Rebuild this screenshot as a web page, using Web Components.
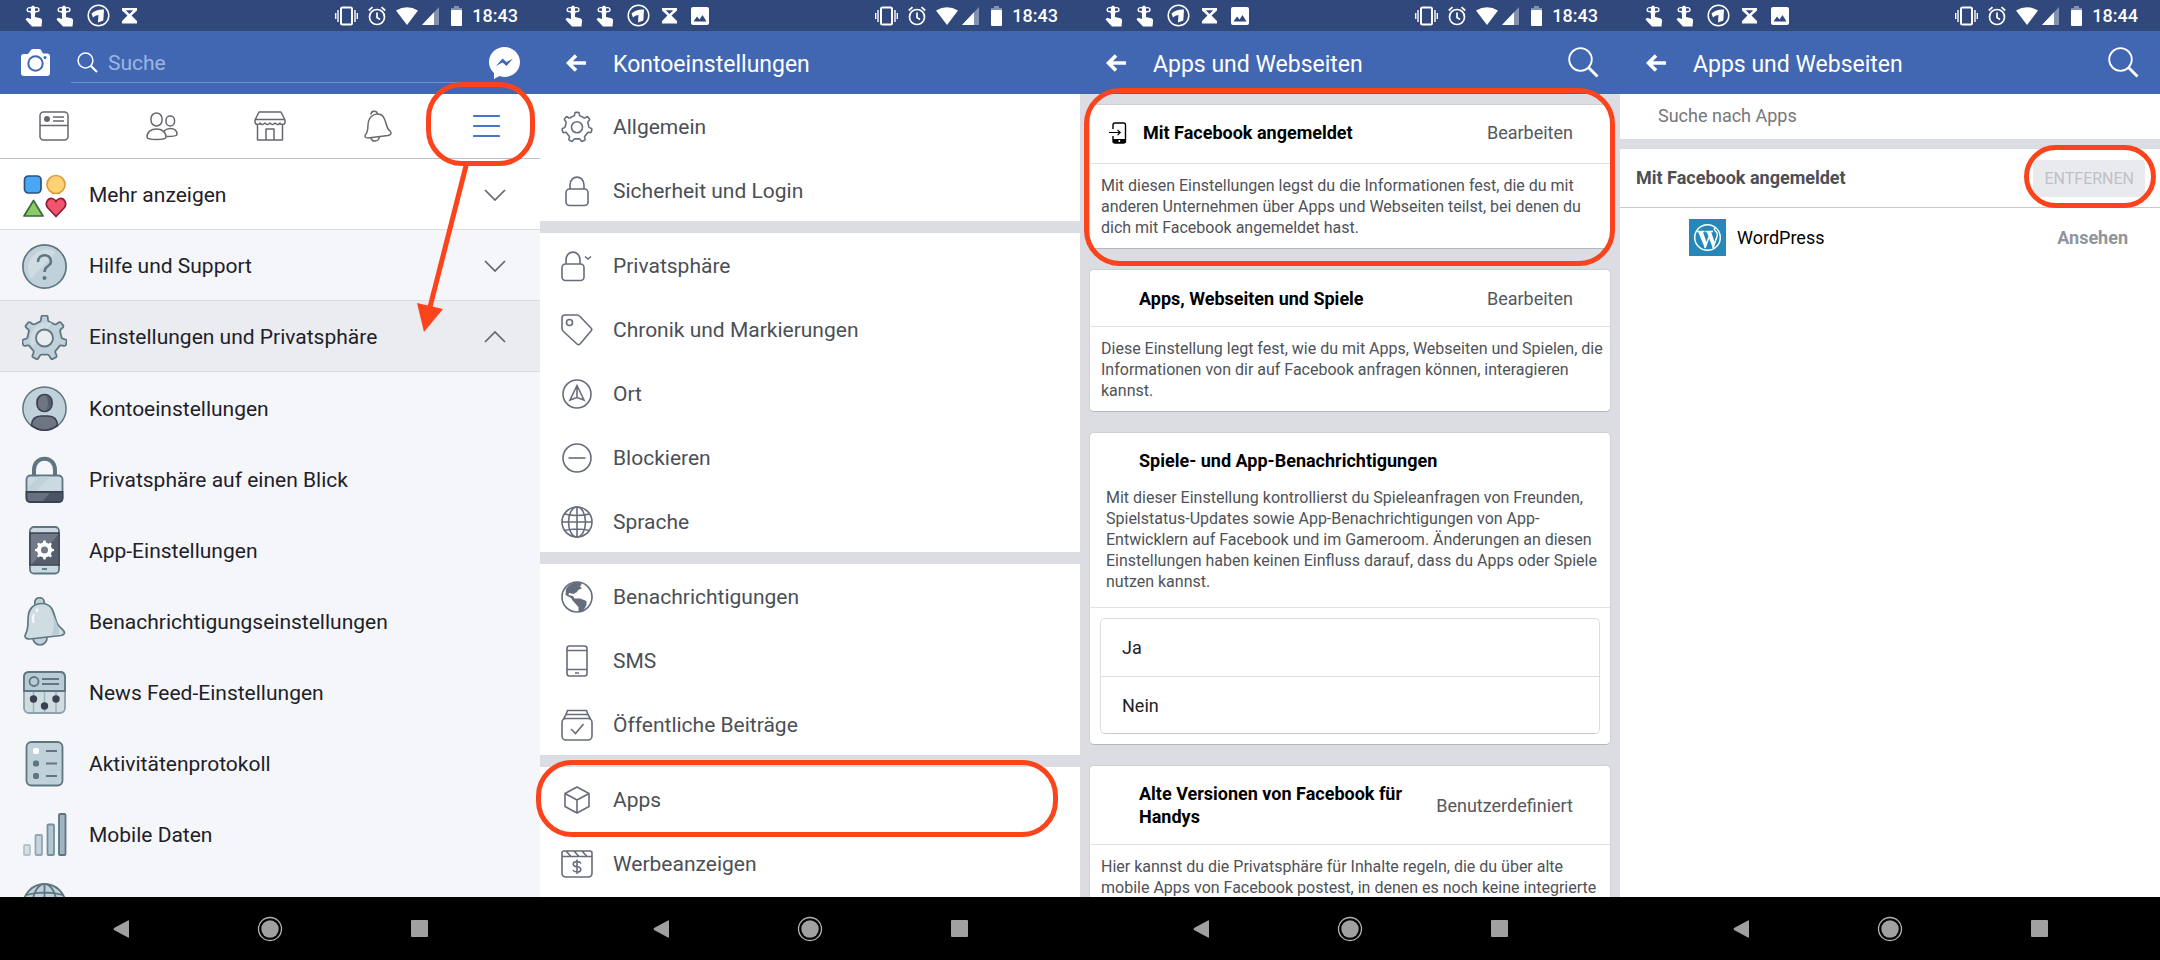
<!DOCTYPE html>
<html lang="de">
<head>
<meta charset="utf-8">
<title>Facebook Einstellungen</title>
<style>
  body {
    margin: 0;
    background: #fff;
    font-family: Roboto, "Liberation Sans", sans-serif;
  }
  main {
    display: grid;
    grid-template-columns: repeat(4, 1fr);
    height: 100vh;
    overflow: hidden;
  }
</style>
</head>
<body>
<main>
  <phone-screen>
    <status-bar slot="status" time="18:43"></status-bar>
    <search-header slot="header"></search-header>
    <tab-strip></tab-strip>
    <menu-row icon="shapes" arrow="down" tone="white">Mehr anzeigen</menu-row>
    <menu-row icon="help" arrow="down" tone="light">Hilfe und Support</menu-row>
    <menu-row icon="gear" arrow="up" tone="dark">Einstellungen und Privatsphäre</menu-row>
    <menu-row icon="account">Kontoeinstellungen</menu-row>
    <menu-row icon="padlock">Privatsphäre auf einen Blick</menu-row>
    <menu-row icon="phonegear">App-Einstellungen</menu-row>
    <menu-row icon="bigbell">Benachrichtigungseinstellungen</menu-row>
    <menu-row icon="feedprefs">News Feed-Einstellungen</menu-row>
    <menu-row icon="log">Aktivitätenprotokoll</menu-row>
    <menu-row icon="bars">Mobile Daten</menu-row>
    <menu-row icon="bigglobe"></menu-row>
  </phone-screen>

  <phone-screen>
    <status-bar slot="status" time="18:43" picture></status-bar>
    <title-header slot="header">Kontoeinstellungen</title-header>
    <settings-group>
      <settings-row icon="cog">Allgemein</settings-row>
      <settings-row icon="lock">Sicherheit und Login</settings-row>
    </settings-group>
    <settings-group>
      <settings-row icon="lockmenu">Privatsphäre</settings-row>
      <settings-row icon="tag">Chronik und Markierungen</settings-row>
      <settings-row icon="place">Ort</settings-row>
      <settings-row icon="block">Blockieren</settings-row>
      <settings-row icon="globe">Sprache</settings-row>
    </settings-group>
    <settings-group>
      <settings-row icon="earth">Benachrichtigungen</settings-row>
      <settings-row icon="mobile">SMS</settings-row>
      <settings-row icon="posts">Öffentliche Beiträge</settings-row>
    </settings-group>
    <settings-group>
      <settings-row icon="cube" marked>Apps</settings-row>
      <settings-row icon="ads">Werbeanzeigen</settings-row>
    </settings-group>
  </phone-screen>

  <phone-screen tone="grey">
    <status-bar slot="status" time="18:43" picture></status-bar>
    <title-header slot="header" search>Apps und Webseiten</title-header>
    <card-list>
      <settings-card icon="signin" action="Bearbeiten" marked>
        <span slot="title">Mit Facebook angemeldet</span>
        Mit diesen Einstellungen legst du die Informationen fest, die du mit anderen Unternehmen über Apps und Webseiten teilst, bei denen du dich mit Facebook angemeldet hast.
      </settings-card>
      <settings-card action="Bearbeiten">
        <span slot="title">Apps, Webseiten und Spiele</span>
        Diese Einstellung legt fest, wie du mit Apps, Webseiten und Spielen, die Informationen von dir auf Facebook anfragen können, interagieren kannst.
      </settings-card>
      <settings-card plain>
        <span slot="title">Spiele- und App-Benachrichtigungen</span>
        Mit dieser Einstellung kontrollierst du Spieleanfragen von Freunden, Spielstatus-Updates sowie App-Benachrichtigungen von App-Entwicklern auf Facebook und im Gameroom. Änderungen an diesen Einstellungen haben keinen Einfluss darauf, dass du Apps oder Spiele nutzen kannst.
        <choice-list slot="choices"></choice-list>
      </settings-card>
      <settings-card action="Benutzerdefiniert">
        <span slot="title">Alte Versionen von Facebook für Handys</span>
        Hier kannst du die Privatsphäre für Inhalte regeln, die du über alte mobile Apps von Facebook postest, in denen es noch keine integrierte
      </settings-card>
    </card-list>
  </phone-screen>

  <phone-screen>
    <status-bar slot="status" time="18:44" picture></status-bar>
    <title-header slot="header" search>Apps und Webseiten</title-header>
    <connected-apps></connected-apps>
  </phone-screen>
</main>

<script>
  // cog outline with rounded teeth, first tooth pointing up
  function cogPath(cx, cy, outer, inner, teeth) {
    const step = Math.PI * 2 / teeth;
    const at = (a, r) => (cx + r * Math.cos(a)).toFixed(1) + ' ' + (cy + r * Math.sin(a)).toFixed(1);
    let d = '';
    for (let i = 0; i < teeth; i++) {
      const a = i * step - Math.PI / 2;
      d += (i ? 'L' : 'M') + at(a - 0.3 * step, inner);
      d += 'Q' + at(a - 0.22 * step, inner) + ' ' + at(a - 0.19 * step, (inner + outer) / 2);
      d += 'Q' + at(a - 0.17 * step, outer) + ' ' + at(a - 0.1 * step, outer);
      d += 'L' + at(a + 0.1 * step, outer);
      d += 'Q' + at(a + 0.17 * step, outer) + ' ' + at(a + 0.19 * step, (inner + outer) / 2);
      d += 'Q' + at(a + 0.22 * step, inner) + ' ' + at(a + 0.3 * step, inner);
    }
    return d + 'Z';
  }

  const OUT = '#5d7681';
  const FILL = '#c1d1d9';
  const DARK = '#3a4151';

  // name: [width, height, markup]
  const ICONS = {
    // status bar
    hand: [19, 22, '<path d="M6 3Q6 .5 8 .5T10 3V12L15.500 13.300Q17.300 13.800 17.100 15.800L16.500 21.500H7L.5 14.500L2 12.800L6 14Z" fill="#fff"/><g fill="none" stroke="#fff" stroke-width="1.300"><ellipse cx="4.800" cy="4.700" rx="2.700" ry="2"/><ellipse cx="11.300" cy="4.700" rx="2.700" ry="2"/><path d="M5.500 7.500H10.500" stroke-width="2"/></g>'],
    one: [23, 23, '<circle cx="11.500" cy="11.500" r="10.300" fill="none" stroke="#fff" stroke-width="1.500"/><path d="M4.500 9.500Q9.500 5 17 5.500L16.300 16.500L11 18.500L11.500 11Q8 11.200 6 13.500Z" fill="#fff"/>'],
    hourglass: [17, 17, '<path d="M0 1H15V3.500L9.500 8.500L15 14V16.500H0V14L5.500 8.500L0 3.500Z" fill="#fff"/><path d="M3.800 3.200H11.200L7.500 7Z" fill="#30487b"/>'],
    picture: [18, 18, '<rect width="18" height="18" rx="2" fill="#fff"/><path d="M2.500 14.500L6 9.500L8.500 12.500L11.500 8L15.500 14.500Z" fill="#30487b"/>'],
    vibrate: [23, 20, '<g fill="none" stroke="#fff"><rect x="6" y="1.500" width="11" height="17" rx="1.500" stroke-width="2"/><path d="M3 4V16M20 4V16M.700 7V13M22.300 7V13" stroke-width="1.400"/></g>'],
    alarm: [18, 20, '<g fill="none" stroke="#fff" stroke-width="1.700"><circle cx="9" cy="11" r="7.500"/><path d="M9 6.500V11.500L12 13.500M.800 4.500L4.500 1.200M17.200 4.500L13.500 1.200"/></g>'],
    signal: [43, 18, '<path d="M0 3.500Q11 -3 22 3.500L11 18Z" fill="#fff"/><path d="M43 0V18H26Z" fill="#fff" opacity=".4"/><path d="M38 5.300V18H26Z" fill="#fff"/>'],
    battery: [13, 20, '<path d="M2 2H5V0H10V2H13V7H2Z" fill="#fff" opacity=".4"/><rect x="2" y="4" width="11" height="16" rx="1" fill="#fff"/>'],

    // headers
    camera: [29, 27, '<path d="M3 5H7L10 1Q10.500 0 12 0H18Q19.500 0 20 1L22 4.500H26Q29 4.500 29 7.500V24Q29 27 26 27H3Q0 27 0 24V8Q0 5 3 5Z" fill="#fff"/><circle cx="14.500" cy="14.500" r="7.200" fill="none" stroke="#4267b2" stroke-width="2"/><circle cx="24" cy="8.500" r="1.500" fill="#4267b2"/>'],
    searchsmall: [21, 21, '<g fill="none" stroke="#fff"><circle cx="8.500" cy="8.500" r="7.400" stroke-width="1.500"/><path d="M13.700 13.700L20 20" stroke-width="2.200"/></g>'],
    search: [31, 31, '<g fill="none" stroke="#fff"><circle cx="12.500" cy="12.500" r="11.300" stroke-width="1.800"/><path d="M20.500 20.500L29.500 29.500" stroke-width="2.800"/></g>'],
    messenger: [31, 32, '<path d="M15.500 0C24 0 31 6.500 31 15S24 30 15.500 30Q13 30 10.500 29L5 32V26Q0 21.500 0 15C0 6.500 7 0 15.500 0Z" fill="#fff"/><path d="M7 19L13.500 11.500L17.500 15L24 11.500L17.500 19L13.500 15.500Z" fill="#4267b2"/>'],
    back: [21, 18, '<path d="M20 9H3M10 1.500L2.500 9L10 16.500" fill="none" stroke="#fff" stroke-width="3.600"/>'],

    // tabs
    feed: [30, 30, '<g fill="none" stroke="#66686d" stroke-width="1.500"><rect x="1" y="1" width="28" height="28" rx="3.500"/><path d="M1 14.500H29M14 6H25M14 10H25"/></g><circle cx="8" cy="8" r="3" fill="#66686d"/>'],
    friends: [32, 30, '<g fill="none" stroke="#66686d" stroke-width="1.500"><rect x="5" y="2" width="11" height="13" rx="5.500"/><path d="M1 26C1 21 5 18 10.500 18S20 21 20 26Q20 28.500 10.500 28.500T1 26Z"/><rect x="20" y="5" width="8.500" height="10" rx="4.200"/><path d="M18 20Q21 17.500 24 17.500C28.500 17.500 31 20 31 23.500Q31 25.500 20.500 25.500"/></g>'],
    shop: [32, 30, '<g fill="none" stroke="#66686d" stroke-width="1.500" stroke-linejoin="round"><path d="M5 1H27L31 9V11Q31 13.500 28.500 13.500T26 12Q24 15 21 12Q18.500 15 16 12Q13.500 15 11 12Q8 15 6 12Q5.500 13.500 3.500 13.500T1 11V9ZM1.500 8.500H30.500M3.500 13.500V29H28.500V13.500M12 29V18H20V29"/></g>'],
    bell: [30, 32, '<g fill="none" stroke="#66686d" stroke-width="1.500" stroke-linejoin="round"><path d="M3 24C6 20 4 14 6 10C9 3 18 2 21 8C24 14 23 18 27 21C29 23 28 25 25 25.500L5 28C2 28 1 26 3 24Z"/><path d="M8 4.500Q8 1.500 11 1.300T14.500 4M8 28Q9 31.500 12.500 31T16.500 26.500"/></g>'],
    burger: [27, 24, '<path d="M1 2H26M1 12H26M1 22H26" stroke="#4477c8" stroke-width="2.200" stroke-linecap="round"/>'],

    // main menu
    shapes: [45, 45, '<g stroke-width="1.700" stroke-linejoin="round"><rect x="2.500" y="3" width="16.500" height="17" rx="4" fill="#47a7f4" stroke="#2a5285"/><circle cx="34" cy="11.500" r="9" fill="#fcd274" stroke="#df9c3f"/><path d="M11.500 27.500L21 43H2Z" fill="#8ec969" stroke="#386b36"/><path d="M34 43.500L25.500 34.500C22.500 30 26 25 30 25.500Q33 26 34 28.500Q35 26 38 25.500C42 25 45.500 30 42.500 34.500Z" fill="#f2546d" stroke="#8d1b36"/></g>'],
    help: [45, 45, `<circle cx="22.500" cy="22.500" r="21.600" fill="${FILL}" stroke="${OUT}" stroke-width="1.700"/><path d="M9 35A19 19 0 0 1 34 8Z" fill="#d0dce2"/><path d="M16 18C16 9 29 9 29 17.500C29 23 22.500 21 22.500 28" fill="none" stroke="${OUT}" stroke-width="2.500"/><circle cx="22.500" cy="34" r="2" fill="${OUT}"/>`],
    gear: [45, 45, `<path d="${cogPath(22.5, 23, 22.5, 17, 7)}" fill="${FILL}" stroke="${OUT}" stroke-width="1.800" stroke-linejoin="round"/><path d="M10 32L30 8A17 17 0 0 0 10 32Z" fill="#cfdbe1"/><circle cx="22.500" cy="23" r="8.500" fill="#ebecf0" stroke="${OUT}" stroke-width="1.800"/>`],
    account: [45, 45, `<circle cx="22.500" cy="22.500" r="21.600" fill="${FILL}" stroke="${OUT}" stroke-width="1.500"/><g fill="#6f7583" stroke="${DARK}" stroke-width="1.700"><rect x="15" y="8.500" width="15" height="17" rx="7.500"/><path d="M9.500 39.500Q10 30 19 30H26Q35 30 35.500 39.500Q22.500 49 9.500 39.500Z"/></g><path d="M24 9.500C31 11 31 22 24 24.500Q28 17 24 9.500Z" fill="#555c6c"/>`],
    padlock: [45, 47, `<path d="M12 19V14C12 -1 33 -1 33 14V19" fill="none" stroke="${OUT}" stroke-width="4"/><rect x="4.500" y="19.500" width="36" height="26.500" rx="4" fill="#cbd9e0" stroke="${OUT}" stroke-width="1.800"/><path d="M4.500 36H40.500V42Q40.500 46 36.500 46H8.500Q4.500 46 4.500 42Z" fill="#686f7e" stroke="${DARK}" stroke-width="1.800"/><path d="M28 37H39.500V42Q39.500 45 36.500 45H21Z" fill="#4b5364"/><path d="M17 20.500H28L14 35H6V32Z" fill="#c1d1d9"/>`],
    phonegear: [45, 49, `<rect x="8" y="1" width="29" height="46.500" rx="4" fill="#cbdae1" stroke="${OUT}" stroke-width="1.800"/><rect x="8" y="7" width="29" height="32" fill="#737987" stroke="${DARK}" stroke-width="1.500"/><path d="M36 9V38H10Z" fill="#565d6d"/><path d="${cogPath(22.5, 24, 9.5, 7.5, 8)}" fill="#fff"/><circle cx="22.500" cy="24" r="3.500" fill="#737987"/><path d="M20 43H25" stroke="${OUT}" stroke-width="1.800"/>`],
    bigbell: [45, 49, `<g fill="${FILL}" stroke="${OUT}" stroke-width="1.700" stroke-linejoin="round"><circle cx="17.500" cy="5.500" r="4.800"/><circle cx="18" cy="41" r="7"/><path d="M4 36C8 28 4 20 8 13C13 4 26 5 30 12C35 22 32 26 41 33C44 36 42 38 39 38.500L8 42C3 42 2 40 4 36Z" fill="#cfdce2"/></g><path d="M28 12Q37 27 37 37L30 38Q35 25 28 12Z" fill="#b9cbd4"/><path d="M12 17Q10 22 12 26M15 11.500V15" stroke="#fff" stroke-width="2.400" fill="none" opacity=".8"/>`],
    feedprefs: [45, 45, `<rect x="2" y="2" width="41" height="41" rx="5" fill="#cfdce2" stroke="#8ca1ab" stroke-width="1.800"/><path d="M2 21V7Q2 2 7 2H38Q43 2 43 7V21Z" fill="#b9cbd4" stroke="${OUT}" stroke-width="1.800"/><path d="M11.500 22V42M22.500 22V42M34 22V42" stroke="#9fb2bb" stroke-width="1.500"/><path d="M20 9H37M20 14H37" stroke="${OUT}" stroke-width="1.800"/><circle cx="12" cy="11.500" r="4.500" fill="none" stroke="${OUT}" stroke-width="1.800"/><g fill="${DARK}"><circle cx="11.500" cy="29" r="3.700"/><circle cx="22.500" cy="36" r="3.700"/><circle cx="34" cy="29" r="3.700"/></g>`],
    log: [45, 47, `<rect x="4.500" y="2" width="36" height="43.500" rx="5" fill="${FILL}" stroke="${OUT}" stroke-width="1.800"/><path d="M24 11H35M24 23.500H35M24 36H35" stroke="${OUT}" stroke-width="1.800"/><rect x="11" y="8" width="6" height="6" rx="2" fill="#fff"/><g fill="${OUT}"><rect x="11" y="20.500" width="6" height="6" rx="2"/><rect x="11" y="33" width="6" height="6" rx="2"/></g>`],
    bars: [45, 45, `<g stroke-width="1.800"><rect x="2" y="33" width="6" height="10" rx="1" fill="#d5dfe4" stroke="#b4c3cb"/><rect x="13.500" y="23" width="6.500" height="20" rx="1" fill="#c6d5dc" stroke="#92a7b1"/><rect x="25.500" y="12.500" width="6.500" height="30.500" rx="1" fill="#b3c7d1" stroke="#73909c"/><rect x="37" y="2" width="6.500" height="41" rx="1" fill="#9fb6c1" stroke="${OUT}"/></g>`],
    bigglobe: [45, 45, `<g fill="${FILL}" stroke="${OUT}" stroke-width="1.800"><circle cx="22.500" cy="22.500" r="21.500"/><ellipse cx="22.500" cy="22.500" rx="12" ry="21.500"/><path d="M22.500 1V44M1 22.500H44M4 12Q22.500 7 41 12M4 33Q22.500 38 41 33" fill="none"/></g>`],
    down: [22, 12, '<path d="M1 1L11 11L21 1" fill="none" stroke="#606770" stroke-width="1.700"/>'],
    up: [22, 12, '<path d="M1 11L11 1L21 11" fill="none" stroke="#606770" stroke-width="1.700"/>'],

    // account settings
    cog: [32, 32, `<g class="line"><path d="${cogPath(16, 16.3, 15, 11.8, 7)}" stroke-linejoin="round"/><circle cx="16" cy="16.300" r="5.500"/></g>`],
    lock: [32, 32, '<g class="line"><rect x="5" y="14" width="22" height="16.500" rx="3.500"/><path d="M9 14V10C9 -.500 23 -.500 23 10V14"/></g>'],
    lockmenu: [32, 32, '<g class="line"><rect x="1" y="14" width="22" height="16.500" rx="3.500"/><path d="M5 14V10C5 -.500 19 -.500 19 10V14M24 6.500L27 9L30 6.500"/></g>'],
    tag: [32, 32, '<g class="line"><path d="M1 4Q1 1 4 1H16Q17.500 1 19 2.500L30 14Q31.500 15.500 30 17L19 30Q17.500 31.500 16 30L2.500 17.500Q1 16 1 14.500Z"/><circle cx="8.500" cy="8.500" r="3"/></g>'],
    place: [32, 32, '<g class="line"><circle cx="16" cy="16" r="14"/><path d="M16 7.500L23 22L16 19.500L9 22ZM16 7.500V19.500"/></g>'],
    block: [32, 32, '<g class="line"><circle cx="16" cy="16" r="14"/><path d="M7.500 16H24.500"/></g>'],
    globe: [32, 32, '<g class="line"><circle cx="16" cy="16" r="15"/><ellipse cx="16" cy="16" rx="8.500" ry="15"/><path d="M16 1V31M1 16H31M3.500 8Q16 11 28.500 8M3.500 24.500Q16 21.500 28.500 24.500"/></g>'],
    earth: [32, 32, '<g class="line"><circle cx="16" cy="16" r="15"/></g><path d="M5 8Q9 1.500 16 1L21 2.500L19 5.500L21 7.500Q17 8 16 11L12.500 13L8 12L7.500 14L12 15L13.500 17.500H19L25.500 20V24L22 30L17.500 31L17.500 26L12 20L10 17L4.500 14Z" fill="#656c7b"/>'],
    mobile: [32, 32, '<g class="line"><rect x="6" y="1" width="20" height="30" rx="2.500"/><path d="M6 5.500H26M6 24.500H26M14 28H18"/></g>'],
    posts: [32, 32, '<g class="line"><rect x="1" y="9.500" width="30" height="21.500" rx="4"/><path d="M2.500 10L5 5.500H27L29.500 10M5 5.500L6.500 1.500H25.500L27 5.500M10 20L14.500 24.500L22.500 15"/></g>'],
    cube: [32, 32, '<g class="line" stroke-linejoin="round"><path d="M16 3L28 9.500V22.500L16 29L4 22.500V9.500ZM4 9.500L16 16L28 9.500M16 16V29"/></g>'],
    ads: [32, 32, '<g class="line"><path d="M1 8.500V5Q1 3 3 3H29Q31 3 31 5V25Q31 29 27 29H5Q1 29 1 25V8.500H31M5 3L10 8.500M13 3L18 8.500M21 3L26 8.500"/><path d="M20 15.500Q19 13.500 16 13.500C11 13.500 11 18.500 16 18.700C21 19 21 24 16 24Q13 24 12 22M16 11.500V26"/></g>'],

    // privacy cards
    signin: [18, 22, '<path d="M4 7V3Q4 1 6 1H14.500Q16.500 1 16.500 3V19Q16.500 21 14.500 21H6Q4 21 4 19V14" fill="none" stroke="#000" stroke-width="1.400"/><path d="M4 17H16.500V21H4Z"/><circle cx="10.300" cy="19" r="1" fill="#fff"/><path d="M0 10.500H11M8.500 7.800L11.200 10.500L8.500 13.200" fill="none" stroke="#000" stroke-width="1.200"/>'],
    wordpress: [37, 37, '<rect width="37" height="37" fill="#2588b8"/><circle cx="18.500" cy="18.500" r="12.800" fill="none" stroke="#fff" stroke-width="1.500"/><path d="M8 12.500H15.500M16.500 12.500H24" stroke="#fff" stroke-width="1.300"/><path d="M9 12.500H13.800L18 24.500L16 29.500ZM17.500 12.500H22L26 24.500L24 29.500Z" fill="#fff"/><path d="M16 29L20 18M24 29L28 17.500Q29 14 26.500 12Q24.500 10.500 26 9" fill="none" stroke="#fff" stroke-width="1.500"/>'],

    // system navigation
    navback: [18, 20, '<path d="M17 2V18Q17 19 16 18.500L2 11Q1 10 2 9L16 1.500Q17 1 17 2Z" fill="#a0a0a0"/>'],
    navhome: [26, 26, '<circle cx="13" cy="13" r="11.500" fill="none" stroke="#b4b4b4" stroke-width="1.300"/><circle cx="13" cy="13" r="8.700" fill="#a0a0a0"/>'],
    navrecent: [17, 17, '<rect width="17" height="17" rx="1" fill="#a0a0a0"/>']
  };

  function icon(name) {
    if (!ICONS[name]) return '';
    const [w, h, body] = ICONS[name];
    return `<svg width="${w}" height="${h}" viewBox="0 0 ${w} ${h}" aria-hidden="true">${body}</svg>`;
  }

  const BASE = `
    <style>
      * { box-sizing: border-box; }
      :host { display: block; }
      svg { display: block; flex: none; }
      button, a, input {
        margin: 0; padding: 0; border: 0; background: none;
        font: inherit; color: inherit; text-align: left; text-decoration: none;
      }
      .line { fill: none; stroke: #656c7b; stroke-width: 1.6; }
    </style>`;

  class BaseElement extends HTMLElement {
    connectedCallback() {
      if (this.shadowRoot) return;
      const tmpl = document.createElement('template');
      tmpl.innerHTML = BASE + this.render();
      this.attachShadow({ mode: 'open' }).appendChild(tmpl.content.cloneNode(true));
    }
  }

  class PhoneScreen extends BaseElement {
    render() {
      return `
        <style>
          :host {
            display: grid;
            grid-template-rows: 31px 63px minmax(0, 1fr) 63px;
            min-width: 0;
            height: 100vh;
            overflow-y: clip;
          }
          :host([tone="grey"]) .content { background: #dcdde2; }
          .content { min-width: 0; }
          nav {
            position: relative;
            z-index: 1;
            display: flex;
            justify-content: center;
            gap: 101px;
            background: #000;
          }
          nav button { width: 48px; display: grid; place-items: center; }
        </style>
        <slot name="status"></slot>
        <slot name="header"></slot>
        <div class="content"><slot></slot></div>
        <nav>
          <button type="button" aria-label="Zurück">${icon('navback')}</button>
          <button type="button" aria-label="Startbildschirm">${icon('navhome')}</button>
          <button type="button" aria-label="Letzte Apps">${icon('navrecent')}</button>
        </nav>`;
    }
  }

  class StatusBar extends BaseElement {
    render() {
      return `
        <style>
          :host {
            display: flex;
            justify-content: space-between;
            padding: 0 22px 0 25px;
            background: #30487b;
            color: #fff;
            font-size: 18px;
            font-weight: 500;
          }
          div { display: flex; align-items: center; gap: 12px; }
          .right { gap: 10px; }
        </style>
        <div>
          ${icon('hand')}${icon('hand')}${icon('one')}${icon('hourglass')}
          ${this.hasAttribute('picture') ? icon('picture') : ''}
        </div>
        <div class="right">
          ${icon('vibrate')}${icon('alarm')}${icon('signal')}${icon('battery')}
          <time>${this.getAttribute('time')}</time>
        </div>`;
    }
  }

  class SearchHeader extends BaseElement {
    render() {
      return `
        <style>
          :host {
            display: flex;
            align-items: center;
            gap: 21px;
            padding: 0 20px 0 21px;
            background: #4267b2;
            color: #fff;
          }
          label {
            flex: 1;
            display: flex;
            align-items: center;
            gap: 10px;
            height: 40px;
            padding-left: 6px;
            border-bottom: 1px solid #7090cf;
          }
          input { flex: 1; min-width: 0; padding-top: 1px; font-size: 21px; outline: 0; }
          input::placeholder { color: #9db4e3; opacity: 1; }
        </style>
        <button type="button" aria-label="Kamera">${icon('camera')}</button>
        <label>${icon('searchsmall')}<input type="text" placeholder="Suche" aria-label="Suche"></label>
        <button type="button" aria-label="Messenger">${icon('messenger')}</button>`;
    }
  }

  class TitleHeader extends BaseElement {
    render() {
      return `
        <style>
          :host {
            display: flex;
            align-items: center;
            padding: 0 21px 0 26px;
            background: #4267b2;
            color: #fff;
          }
          h1 { flex: 1; margin: 0 0 0 26px; padding-top: 3px; font-size: 23px; font-weight: 400; }
        </style>
        <button type="button" aria-label="Zurück">${icon('back')}</button>
        <h1><slot></slot></h1>
        ${this.hasAttribute('search') ? `<button type="button" aria-label="Suchen">${icon('search')}</button>` : ''}`;
    }
  }

  // red ring drawn over whatever it is placed in
  class CalloutRing extends BaseElement {
    render() {
      return `
        <style>
          :host {
            position: absolute;
            border: 5px solid #fb431c;
            border-radius: 36px;
            pointer-events: none;
          }
        </style>`;
    }
  }

  class TabStrip extends BaseElement {
    render() {
      return `
        <style>
          :host {
            display: grid;
            grid-template-columns: repeat(5, 1fr);
            height: 64px;
            background: #fff;
            border-bottom: 1px solid #bcbec2;
          }
          .cell { position: relative; display: grid; }
          button { display: grid; place-items: center; }
          callout-ring { inset: -12px 5px -8px -6px; }
          .arrow { position: absolute; left: -16px; top: 68px; }
        </style>
        <div class="cell"><button type="button" aria-label="Neuigkeiten">${icon('feed')}</button></div>
        <div class="cell"><button type="button" aria-label="Freunde">${icon('friends')}</button></div>
        <div class="cell"><button type="button" aria-label="Marketplace">${icon('shop')}</button></div>
        <div class="cell"><button type="button" aria-label="Benachrichtigungen">${icon('bell')}</button></div>
        <div class="cell">
          <button type="button" aria-label="Menü">${icon('burger')}</button>
          <callout-ring></callout-ring>
          <svg class="arrow" width="56" height="172" viewBox="0 0 56 172" aria-hidden="true">
            <path d="M51 0L13 149" stroke="#fb431c" stroke-width="5"/>
            <path d="M1 141L27 147L8 170Z" fill="#fb431c"/>
          </svg>
        </div>`;
    }
  }

  class MenuRow extends BaseElement {
    render() {
      return `
        <style>
          :host { background: #f5f6f9; color: #1d2129; }
          :host([tone]) { border-bottom: 1px solid #d8dadf; }
          :host([tone]) button { height: 70px; }
          :host([tone="white"]) { background: #fff; }
          :host([tone="dark"]) { background: #ebecf0; }
          button {
            display: flex;
            align-items: center;
            gap: 22px;
            width: 100%;
            height: 71px;
            padding: 2px 34px 0 22px;
            font-size: 21px;
          }
          span { flex: 1; }
        </style>
        <button type="button">
          ${icon(this.getAttribute('icon'))}
          <span><slot></slot></span>
          ${icon(this.getAttribute('arrow'))}
        </button>`;
    }
  }

  class SettingsGroup extends BaseElement {
    render() {
      return `
        <style>
          :host { display: grid; gap: 1px; background: #fff; }
          :host(:not(:first-of-type)) { border-top: 12px solid #dcdde2; }
        </style>
        <slot></slot>`;
    }
  }

  class SettingsRow extends BaseElement {
    render() {
      return `
        <style>
          :host { position: relative; color: #4b4f56; }
          a {
            display: flex;
            align-items: center;
            gap: 20px;
            height: 63px;
            padding: 3px 21px 0;
            font-size: 21px;
          }
          callout-ring { inset: -7px 22px -7px -4px; }
        </style>
        <a href="#">${icon(this.getAttribute('icon'))}<slot></slot></a>
        ${this.hasAttribute('marked') ? '<callout-ring></callout-ring>' : ''}`;
    }
  }

  class CardList extends BaseElement {
    render() {
      return `
        <style>
          :host { display: grid; gap: 20px; padding: 10px 9px; }
        </style>
        <slot></slot>`;
    }
  }

  class SettingsCard extends BaseElement {
    render() {
      const action = this.getAttribute('action');
      return `
        <style>
          :host {
            position: relative;
            background: #fff;
            border: 1px solid #cfd1d5;
            border-bottom-color: #b4b6ba;
            border-radius: 5px;
          }
          header {
            display: flex;
            align-items: center;
            justify-content: space-between;
            gap: 16px;
            min-height: 57px;
            padding: 16px 37px 16px 49px;
            border-bottom: 1px solid #e2e3e5;
            font-size: 18px;
            line-height: 23px;
          }
          h2 { display: flex; align-items: center; gap: 16px; margin: 0; font: inherit; font-weight: 700; color: #000; }
          a { color: #55585e; }
          p { margin: 0; padding: 11px 2px 10px 11px; font-size: 16px; line-height: 21px; color: #4f5258; }
          :host([icon]) header { padding: 16px 37px 19px 19px; }
          :host([plain]) header { min-height: 52px; padding-bottom: 13px; padding-top: 15px; border-bottom: 0; }
          :host([plain]) p { padding: 2px 11px 15px 16px; }
          callout-ring { inset: -17px -5px -18px -6px; }
        </style>
        <header>
          <h2>${icon(this.getAttribute('icon'))}<slot name="title"></slot></h2>
          ${action ? `<a href="#">${action}</a>` : ''}
        </header>
        <p><slot></slot></p>
        <slot name="choices"></slot>
        ${this.hasAttribute('marked') ? '<callout-ring></callout-ring>' : ''}`;
    }
  }

  class ChoiceList extends BaseElement {
    render() {
      return `
        <style>
          :host { padding: 10px; border-top: 1px solid #e2e3e5; }
          div { border: 1px solid #dcdee1; border-bottom-color: #c9cbcf; border-radius: 5px; }
          button {
            display: block;
            width: 100%;
            height: 57px;
            padding: 0 21px;
            font-size: 18px;
            color: #1d2129;
          }
          button + button { border-top: 1px solid #dcdee1; }
        </style>
        <div>
          <button type="button">Ja</button>
          <button type="button">Nein</button>
        </div>`;
    }
  }

  class ConnectedApps extends BaseElement {
    render() {
      return `
        <style>
          :host { background: #fff; font-size: 18px; }
          input { display: block; width: 100%; height: 45px; padding: 0 38px 2px; outline: 0; }
          input::placeholder { color: #75777b; opacity: 1; }
          header {
            display: flex;
            align-items: center;
            justify-content: space-between;
            height: 69px;
            padding: 0 15px 0 16px;
            border-top: 10px solid #dcdde2;
            border-bottom: 1px solid #c8cacd;
          }
          h2 { margin: 0; padding-bottom: 2px; font: inherit; font-weight: 700; color: #4b4f56; }
          .remove { position: relative; }
          .remove button {
            height: 37px;
            padding: 0 11px;
            border-radius: 3px;
            background: #e9eaed;
            color: #bec1c6;
            font-size: 16px;
          }
          callout-ring { inset: -15px -11px -11px -9px; }
          .app { display: flex; align-items: center; gap: 11px; padding: 11px 32px 11px 69px; }
          .app span { flex: 1; color: #000; }
          .app a { font-weight: 700; color: #90949c; }
        </style>
        <input type="text" placeholder="Suche nach Apps" aria-label="Suche nach Apps">
        <header>
          <h2>Mit Facebook angemeldet</h2>
          <div class="remove">
            <button type="button" disabled>ENTFERNEN</button>
            <callout-ring></callout-ring>
          </div>
        </header>
        <div class="app">${icon('wordpress')}<span>WordPress</span><a href="#">Ansehen</a></div>`;
    }
  }

  customElements.define('callout-ring', CalloutRing);
  customElements.define('phone-screen', PhoneScreen);
  customElements.define('status-bar', StatusBar);
  customElements.define('search-header', SearchHeader);
  customElements.define('title-header', TitleHeader);
  customElements.define('tab-strip', TabStrip);
  customElements.define('menu-row', MenuRow);
  customElements.define('settings-group', SettingsGroup);
  customElements.define('settings-row', SettingsRow);
  customElements.define('card-list', CardList);
  customElements.define('settings-card', SettingsCard);
  customElements.define('choice-list', ChoiceList);
  customElements.define('connected-apps', ConnectedApps);
</script>
</body>
</html>
